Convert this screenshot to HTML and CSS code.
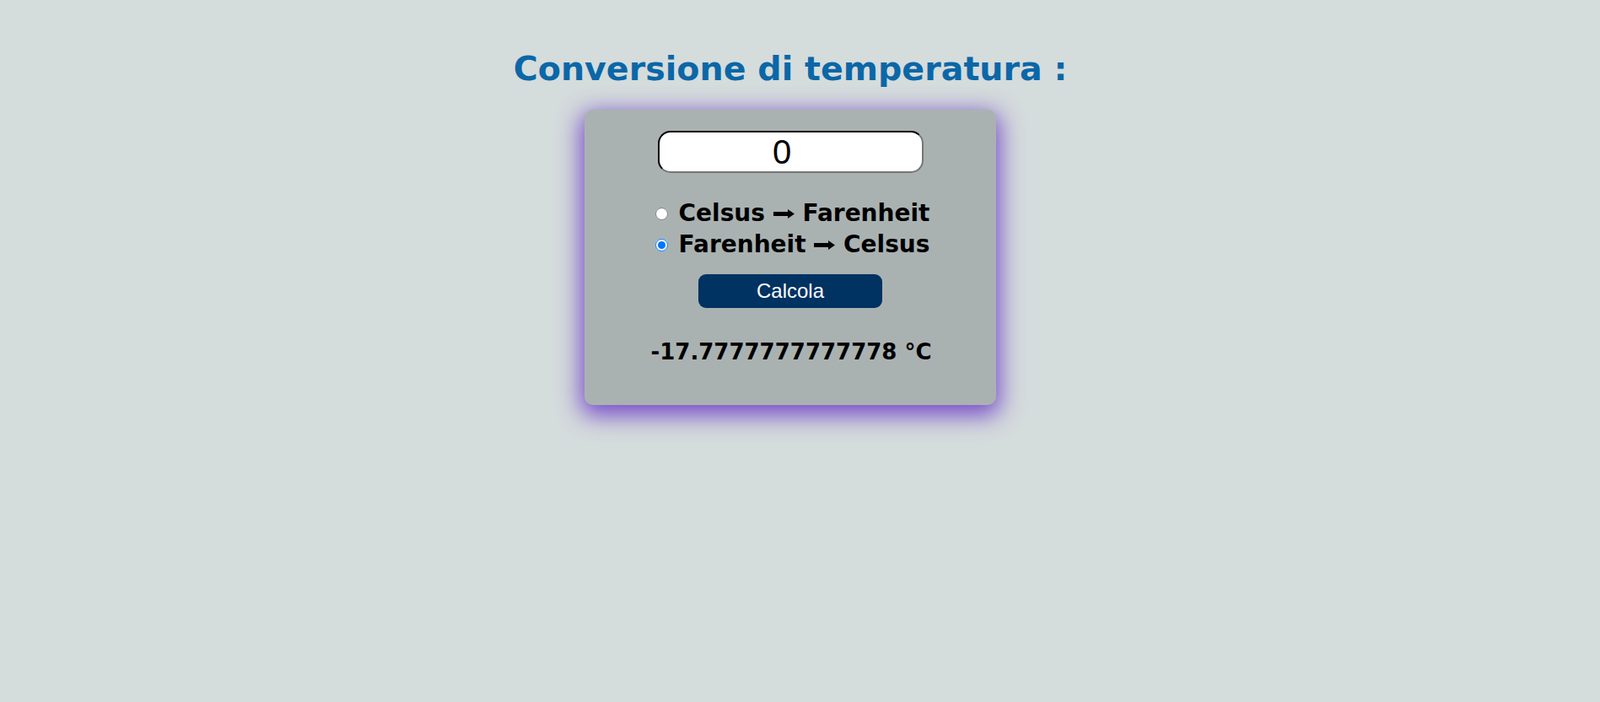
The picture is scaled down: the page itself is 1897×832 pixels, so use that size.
FILE: index.html
```html
<!DOCTYPE html>
<html lang="it">
<head>
<meta charset="utf-8">
<title>Conversione di temperatura</title>
<link rel="stylesheet" href="styles.css">
</head>
<body>
<main class="page">
  <h1 class="title">Conversione di temperatura :</h1>
  <form class="card" onsubmit="return false">
    <input class="value" type="text" value="0">
    <div class="options">
      <label class="option"><input class="radio" type="radio" name="mode"><span>Celsus <svg class="arrow" viewBox="0 0 25 11" width="25" height="11" aria-label="➞"><path d="M0 3H17V0L25 5.5L17 11V8H0Z"/></svg> Farenheit</span></label>
      <label class="option"><input class="radio" type="radio" name="mode" checked><span>Farenheit <svg class="arrow" viewBox="0 0 25 11" width="25" height="11" aria-label="➞"><path d="M0 3H17V0L25 5.5L17 11V8H0Z"/></svg> Celsus</span></label>
    </div>
    <button class="calc" type="button">Calcola</button>
    <p class="result">-17.7777777777778 °C</p>
  </form>
</main>
</body>
</html>
```

FILE: styles.css
```css
html, body {
  margin: 0;
  padding: 0;
  background: #d5dcdc;
}
body {
  min-height: 100vh;
}
.page {
  display: flex;
  flex-direction: column;
  align-items: center;
  margin-right: 23px;
  padding-bottom: 120px;
  font-family: "DejaVu Sans", Verdana, sans-serif;
}
.title {
  margin: 58px 0 26px;
  font-size: 39.6px;
  line-height: 46px;
  font-weight: bold;
  color: #0b67a7;
}
.card {
  box-sizing: border-box;
  width: 488px;
  height: 350px;
  padding-top: 25px;
  background: #aab2b1;
  border-radius: 10px;
  box-shadow: 0 8px 28px 4px rgba(112, 66, 200, 0.95);
  display: flex;
  flex-direction: column;
  align-items: center;
}
.value {
  box-sizing: border-box;
  width: 315px;
  height: 50px;
  margin: 0;
  border: 2px inset #767676;
  border-top-color: #222;
  border-left-color: #222;
  border-radius: 15px;
  background: #fff;
  text-align: center;
  font-family: "Liberation Sans", Arial, sans-serif;
  font-size: 40px;
  color: #000;
  padding: 0 20px 0 0;
}
.options {
  margin-top: 29px;
  display: flex;
  flex-direction: column;
}
.option {
  display: flex;
  align-items: center;
  font-size: 28px;
  line-height: 37px;
  font-weight: bold;
  color: #000;
}
.radio {
  width: 15px;
  height: 15px;
  margin: 2px 13px 0 5px;
}
.arrow {
  display: inline-block;
  vertical-align: 3px;
  fill: #000;
}
.calc {
  margin-top: 17px;
  width: 218px;
  height: 40px;
  border: none;
  border-radius: 9px;
  background: #003262;
  color: #fff;
  font-family: "Liberation Sans", Arial, sans-serif;
  font-size: 24px;
  padding: 0;
}
.result {
  margin: 37px 0 0 2px;
  font-size: 26px;
  line-height: 30px;
  font-weight: bold;
  color: #000;
}
```
